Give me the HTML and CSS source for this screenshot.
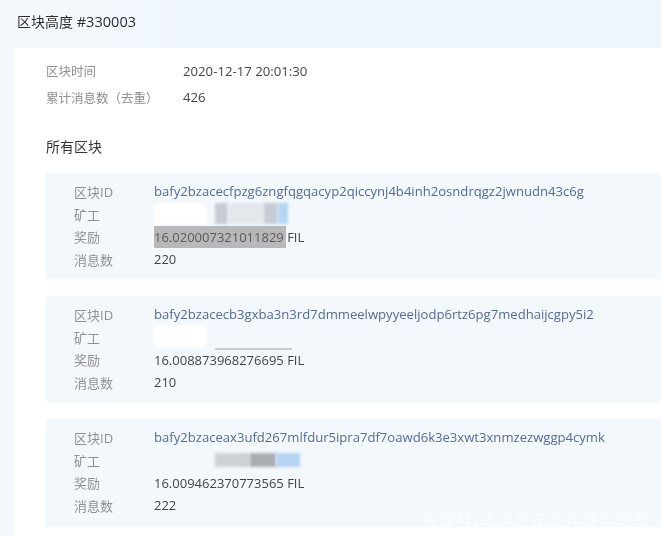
FILE: index.html
```html
<!DOCTYPE html>
<html lang="zh">
<head>
<meta charset="utf-8">
<title>区块高度 #330003</title>
<link rel="stylesheet" href="styles.css">
</head>
<body>
<div class="page">
  <h1 class="title">区块高度 <span class="title-num">#330003</span></h1>
  <main class="panel">
    <dl class="summary">
      <dt>区块时间</dt><dd>2020-12-17 20:01:30</dd>
      <dt>累计消息数（去重）</dt><dd>426</dd>
    </dl>
    <h2 class="section">所有区块</h2>
    <section class="card">
      <span class="label">区块ID</span><a class="link">bafy2bzacecfpzg6zngfqgqacyp2qiccynj4b4inh2osndrqgz2jwnudn43c6g</a>
      <span class="label">矿工</span>
      <div class="miner">
        <i class="blot blot-white"></i><i class="blot blot-grey"></i><i class="blot blot-pale"></i><i class="blot blot-mid"></i><i class="blot blot-blue"></i>
      </div>
      <span class="label">奖励</span><span class="value"><mark class="hl">16.020007321011829</mark> FIL</span>
      <span class="label">消息数</span><span class="value">220</span>
    </section>
    <section class="card">
      <span class="label">区块ID</span><a class="link">bafy2bzacecb3gxba3n3rd7dmmeelwpyyeeljodp6rtz6pg7medhaijcgpy5i2</a>
      <span class="label">矿工</span>
      <div class="miner"><i class="blot blot-white"></i><i class="rule"></i></div>
      <span class="label">奖励</span><span class="value">16.008873968276695 FIL</span>
      <span class="label">消息数</span><span class="value">210</span>
    </section>
    <section class="card card-last">
      <span class="label">区块ID</span><a class="link">bafy2bzaceax3ufd267mlfdur5ipra7df7oawd6k3e3xwt3xnmzezwggp4cymk</a>
      <span class="label">矿工</span>
      <div class="miner">
        <i class="blot blot-clear"></i><i class="blot blot-light"></i><i class="blot blot-dark"></i><i class="blot blot-sky"></i>
      </div>
      <span class="label">奖励</span><span class="value">16.009462370773565 FIL</span>
      <span class="label">消息数</span><span class="value">222</span>
    </section>
    <div class="watermark">百家号/冰河分布式存储实验室</div>
  </main>
</div>
</body>
</html>
```
FILE: styles.css
```css
* { box-sizing: border-box; }
html, body { margin: 0; padding: 0; height: 100%; }
body {
  background: #fff;
  font-family: "Open Sans", "Noto Sans CJK SC", sans-serif;
  color: #333;
  overflow: hidden;
}
.page {
  width: 661px;
  height: 536px;
  overflow: hidden;
  background: linear-gradient(90deg, #f5f9fd 0, #eff6fc 30%, #eef5fc 100%);
  filter: blur(.35px);
}
.title {
  margin: 0;
  height: 48px;
  padding: 11px 0 0 17px;
  font-size: 14px;
  line-height: 20px;
  font-weight: 400;
  color: #2d2d2d;
}
.title-num { font-size: 14.6px; }
.panel {
  position: relative;
  margin-left: 14px;
  height: 488px;
  background: #fff;
  padding: 9.5px 0 0 32px;
}
.summary {
  display: grid;
  grid-template-columns: 137px 1fr;
  grid-auto-rows: 26.5px;
  margin: 0;
  align-items: center;
}
.summary dt { font-size: 12.5px; color: #8f8f8f; white-space: nowrap; }
.summary dd { margin: 0; font-size: 13.2px; color: #444; }
.section {
  margin: 25.5px 0 14.5px;
  font-size: 14px;
  line-height: 22px;
  font-weight: 400;
  color: #333;
}
.card {
  display: grid;
  grid-template-columns: 80px 1fr;
  grid-auto-rows: 22.7px;
  align-items: center;
  height: 106px;
  margin-bottom: 17px;
  padding: 7.5px 0 0 28px;
  background: #f3f8fd;
}
.card-last { height: 108px; margin-bottom: 0; }
.label { font-size: 13px; color: #909090; }
.link { font-size: 13.1px; color: #566a96; white-space: nowrap; }
.value { font-size: 13px; color: #444; white-space: nowrap; }
.hl { background: #b8b8b8; color: #5a5a5a; padding: 2px 2px 2px 0; margin-right: -2px; }
.miner { display: flex; align-items: flex-start; height: 22px; }
.blot { display: block; height: 21px; filter: blur(1.5px); }
.blot-white { width: 52px; background: #fff; }
.blot-grey { width: 13px; margin-left: 9px; background: #c6ccd3; }
.blot-pale { width: 36px; background: #e3e8ed; }
.blot-mid { width: 14px; background: #c6ccd3; }
.blot-blue { width: 10px; background: #b3d6f4; }
.blot-clear { width: 61px; background: transparent; }
.blot-light, .blot-dark, .blot-sky { height: 14px; margin-top: 4px; }
.blot-light { width: 35px; background: #cdd2d6; }
.blot-dark { width: 26px; background: #a9adb1; }
.blot-sky { width: 24px; background: #b4d4f2; }
.rule {
  display: block;
  width: 77px;
  height: 2px;
  margin: 22px 0 0 9px;
  background: #c9cdd1;
  filter: blur(.6px);
}
.watermark {
  position: absolute;
  left: 408px;
  top: 461px;
  font-family: "Noto Sans CJK SC", sans-serif;
  font-size: 17px;
  line-height: 20px;
  color: rgba(255, 255, 255, .6);
  white-space: nowrap;
}
```
